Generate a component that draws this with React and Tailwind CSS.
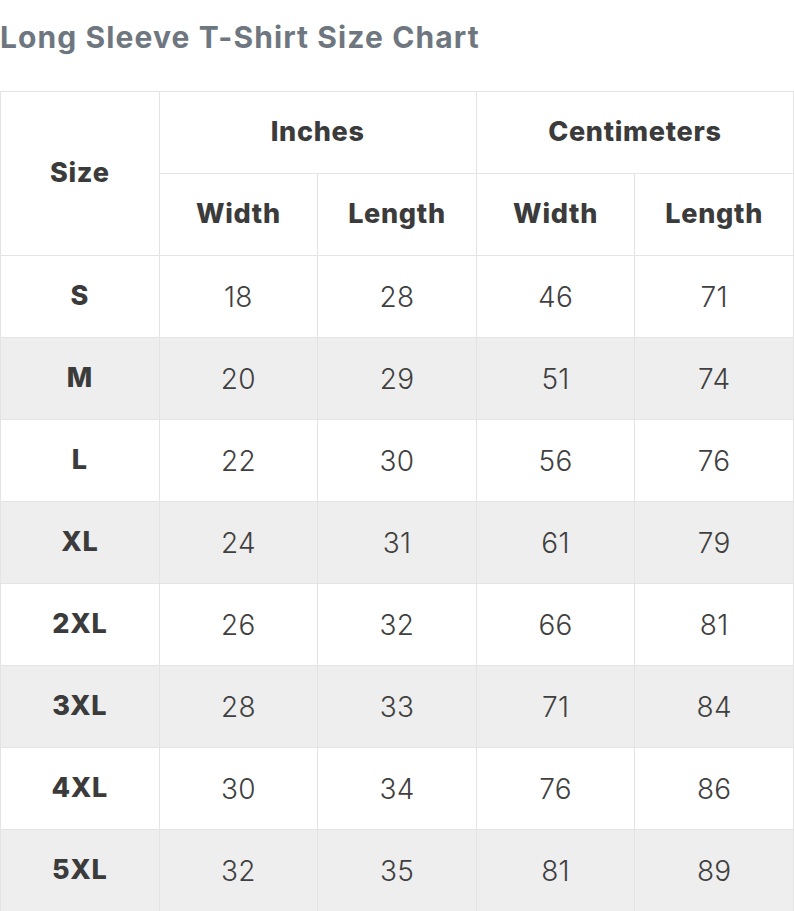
import React from 'react';

const rows = [
  ['S', 18, 28, 46, 71],
  ['M', 20, 29, 51, 74],
  ['L', 22, 30, 56, 76],
  ['XL', 24, 31, 61, 79],
  ['2XL', 26, 32, 66, 81],
  ['3XL', 28, 33, 71, 84],
  ['4XL', 30, 34, 76, 86],
  ['5XL', 32, 35, 81, 89],
];

const cell = 'border border-[#e4e4e4] text-center align-middle';
const head = `${cell} text-[27px] font-extrabold tracking-[0.7px]`;

export default function App() {
  return (
    <div className="w-[794px] bg-white font-['Inter',sans-serif] text-[#3b3b3b]">
      {/* title */}
      <h1 className="h-[91px] pt-[17px] text-[30px] font-bold leading-[40px] tracking-[1.1px] text-[#6e7780]">
        Long Sleeve T-Shirt Size Chart
      </h1>

      <table className="w-[794px] table-fixed border-collapse">
        <thead>
          <tr className="h-[82px]">
            <th rowSpan={2} className={head}>Size</th>
            <th colSpan={2} className={head}>Inches</th>
            <th colSpan={2} className={head}>Centimeters</th>
          </tr>
          <tr className="h-[82px]">
            <th className={head}>Width</th>
            <th className={head}>Length</th>
            <th className={head}>Width</th>
            <th className={head}>Length</th>
          </tr>
        </thead>
        <tbody>
          {rows.map((r, i) => (
            <tr key={r[0]} className={`h-[82px] ${i % 2 === 1 ? 'bg-[#eeeeee]' : 'bg-white'}`}>
              <td className={head}>{r[0]}</td>
              {r.slice(1).map((v, j) => (
                <td key={j} className={`${cell} text-[28px] font-light tracking-[0.3px] text-[#404040]`}>{v}</td>
              ))}
            </tr>
          ))}
        </tbody>
      </table>
    </div>
  );
}
